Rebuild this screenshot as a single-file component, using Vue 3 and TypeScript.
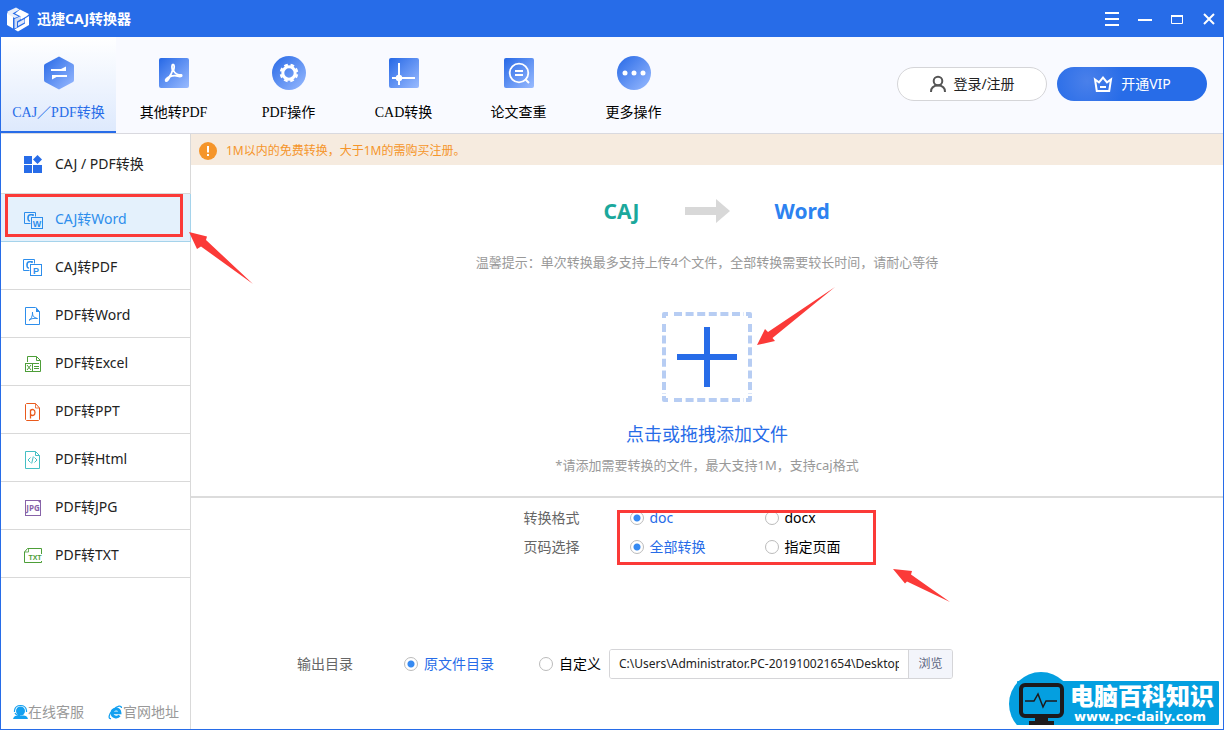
<script setup lang="ts">
import { ref } from 'vue'

interface Entry {
  id: string
  label: string
}

const tabs: Entry[] = [
  { id: 'caj', label: 'CAJ／PDF转换' },
  { id: 'other', label: '其他转PDF' },
  { id: 'pdf', label: 'PDF操作' },
  { id: 'cad', label: 'CAD转换' },
  { id: 'paper', label: '论文查重' },
  { id: 'more', label: '更多操作' },
]

const modes: Entry[] = [
  { id: 'caj-word', label: 'CAJ转Word' },
  { id: 'caj-pdf', label: 'CAJ转PDF' },
  { id: 'pdf-word', label: 'PDF转Word' },
  { id: 'pdf-excel', label: 'PDF转Excel' },
  { id: 'pdf-ppt', label: 'PDF转PPT' },
  { id: 'pdf-html', label: 'PDF转Html' },
  { id: 'pdf-jpg', label: 'PDF转JPG' },
  { id: 'pdf-txt', label: 'PDF转TXT' },
]

const activeTab = ref<string>('caj')
const activeMode = ref<string>('caj-word')
const format = ref<string>('doc')
const pages = ref<string>('all')
const target = ref<string>('source')
const outputPath = ref<string>('C:\\Users\\Administrator.PC-201910021654\\Desktop')
</script>

<template>
  <div class="window">
    <header class="titlebar">
      <svg class="logo" width="24" height="26" viewBox="0 0 24 26" aria-hidden="true">
        <path d="M1 7l6 3v12.500l-6-3.500z" fill="#fff" />
        <path d="M1.500 5.500L10 1.500l3.500 2L6.500 7.500l6 3-4 1.500-7-4z" fill="#e9effb" />
        <path d="M14 3.500l9 4.500-2 2-6 3.500v-3l-6-3z" fill="#fff" />
        <path d="M8.500 13l6.500-3v3l-4 2.500v6l-2.500 1z" fill="#cfdcf6" />
        <path d="M23 10v9l-11 6.500-3.500-2 10.500-6v-5z" fill="#fff" />
        <path d="M12 16.500l6.500-3.500v3.500L12 20z" fill="#dfe8fa" />
      </svg>
      <h1>迅捷CAJ转换器</h1>
      <div class="controls">
        <button type="button" aria-label="菜单">
          <svg width="16" height="16" viewBox="0 0 16 16"><path d="M0 2h14M0 8h14M0 14h14" stroke="#fff" stroke-width="2" /></svg>
        </button>
        <button type="button" aria-label="最小化">
          <svg width="16" height="16" viewBox="0 0 16 16"><path d="M1 9h14" stroke="#fff" stroke-width="2" /></svg>
        </button>
        <button type="button" aria-label="最大化">
          <svg width="16" height="16" viewBox="0 0 16 16"><path d="M2.500 4v8.500h11V4" fill="none" stroke="#fff" /><path d="M2 5h12" stroke="#fff" stroke-width="2" /></svg>
        </button>
        <button type="button" aria-label="关闭">
          <svg width="16" height="16" viewBox="0 0 16 16"><path d="M3 3l10 10M13 3L3 13" stroke="#fff" stroke-width="2" /></svg>
        </button>
      </div>
    </header>

    <div class="toolbar">
      <nav class="tabs">
        <button
          v-for="tab in tabs"
          :key="tab.id"
          type="button"
          :class="['tab', { active: tab.id === activeTab }]"
          @click="activeTab = tab.id"
        >
          <svg width="36" height="36" viewBox="0 0 36 36" aria-hidden="true">
            <defs>
              <linearGradient :id="'fill-' + tab.id" x1="0" y1="0" x2="1" y2="1">
                <stop offset="0" stop-color="#2668e6" />
                <stop offset="1" stop-color="#9abbff" />
              </linearGradient>
            </defs>
            <g v-if="tab.id === 'caj'">
              <path d="M18 1.500 L32 9 Q33 9.500 33 11 V25 Q33 26.500 32 27 L18 34.500 L4 27 Q3 26.500 3 25 V11 Q3 9.500 4 9 Z" :fill="`url(#fill-${tab.id})`" />
              <path d="M10 14h10l5-2.500V16H10zM26 20v2H15.500L11 24.500V20z" fill="#fff" />
            </g>
            <g v-else-if="tab.id === 'other'">
              <rect x="3" y="3" width="30" height="30" rx="2" :fill="`url(#fill-${tab.id})`" />
              <path d="M17 9.500c1.500 0 1.500 2.500.5 6 1.500 3.500 4 4.500 8 4.500.8 1.500-1.500 2-4 1-2.500-.6-5-.3-7.500.6-1.500 3-3 5-4.200 4.300-.8-.8 1-3 3.700-4.300 1.500-2 2.500-4 3-6.200-.8-3-.8-5.900.5-5.900z" fill="none" stroke="#fff" stroke-width="1.800" stroke-linejoin="round" />
            </g>
            <g v-else-if="tab.id === 'pdf'">
              <circle cx="18" cy="18" r="17" :fill="`url(#fill-${tab.id})`" />
              <circle cx="18" cy="18" r="6.200" fill="none" stroke="#fff" stroke-width="3" />
              <circle cx="18" cy="18" r="8" fill="none" stroke="#fff" stroke-width="2.600" stroke-dasharray="3.600 2.680" stroke-dashoffset="-1.300" />
            </g>
            <g v-else-if="tab.id === 'cad'">
              <rect x="3" y="3" width="30" height="30" rx="2" :fill="`url(#fill-${tab.id})`" />
              <path d="M13 8v22M6 23h23" stroke="#fff" stroke-width="2" />
              <circle cx="13" cy="23" r="3.200" fill="#fff" />
            </g>
            <g v-else-if="tab.id === 'paper'">
              <rect x="3" y="3" width="30" height="30" rx="2" :fill="`url(#fill-${tab.id})`" />
              <circle cx="18" cy="18" r="9.300" fill="none" stroke="#fff" stroke-width="1.800" />
              <path d="M14 16h8M14 20h8M24 24l4 4" stroke="#fff" stroke-width="2" />
            </g>
            <g v-else>
              <circle cx="18" cy="18" r="17" :fill="`url(#fill-${tab.id})`" />
              <circle cx="9" cy="18" r="2.500" fill="#fff" />
              <circle cx="18" cy="18" r="2.500" fill="#fff" />
              <circle cx="27" cy="18" r="2.500" fill="#fff" />
            </g>
          </svg>
          <span>{{ tab.label }}</span>
        </button>
      </nav>
      <div class="account">
        <button type="button" class="pill login">
          <svg width="18" height="18" viewBox="0 0 18 18" fill="none" stroke="#555" stroke-width="2" aria-hidden="true">
            <circle cx="9" cy="6" r="4.300" /><path d="M2 17c0-4 2.500-6.500 7-6.500s7 2.500 7 6.500" />
          </svg>
          登录/注册
        </button>
        <button type="button" class="pill vip">
          <svg width="20" height="18" viewBox="0 0 20 18" fill="none" stroke="#fff" stroke-width="2" aria-hidden="true">
            <path d="M2 4.500l4 2.800L10 2.500l4 4.800 4-2.800L16.200 16H3.800z" /><path d="M7 12h6" />
          </svg>
          开通VIP
        </button>
      </div>
    </div>

    <div class="body">
      <aside class="sidebar">
        <h2 class="group">
          <svg width="22" height="22" viewBox="0 0 22 22" fill="#276ce8" aria-hidden="true">
            <rect x="2" y="3" width="8" height="8" /><rect x="2" y="12" width="8" height="8" />
            <rect x="11" y="12" width="9" height="8" /><path d="M15.500 2l4.500 4.500-4.500 4.500L11 6.500z" />
          </svg>
          CAJ / PDF转换
        </h2>
        <ul>
          <li v-for="mode in modes" :key="mode.id" :class="{ selected: mode.id === activeMode }">
            <button type="button" @click="activeMode = mode.id">
              <svg width="22" height="22" viewBox="0 0 22 22" fill="none" aria-hidden="true">
                <g v-if="mode.id === 'caj-word'" stroke="#2d8eec">
                  <path d="M8.500 15.500h-6v-11h11v4" /><rect x="9.500" y="9.500" width="11" height="11" />
                  <path d="M11 8V6.800H8.500Q6 6.800 6 10t2 3" stroke-width="1.600" />
                  <text class="glyph" x="15" y="18.500" font-size="9" fill="#2d8eec" stroke="none">W</text>
                </g>
                <g v-else-if="mode.id === 'caj-pdf'" stroke="#2d8eec">
                  <path d="M7.500 14.500h-6v-11h11v4" /><rect x="8.500" y="8.500" width="11" height="11" />
                  <path d="M10 7V5.800H7.500Q5 5.800 5 9t2 3" stroke-width="1.600" />
                  <text class="glyph" x="14" y="17.500" font-size="9" fill="#2d8eec" stroke="none">P</text>
                </g>
                <g v-else-if="mode.id === 'pdf-word'" stroke="#2d8eec">
                  <path d="M13.500 3.500h-10v17h14v-13z" /><path d="M14 3v5h4z" fill="#2d8eec" stroke="none" />
                  <path d="M10.500 8c0 4 1 5.500 5 6.500M10.500 8c.3 4-1.500 7.500-3.500 8.500M7 16c2.500-1.500 5-2 8.500-1.500" />
                </g>
                <g v-else-if="mode.id === 'pdf-excel'" stroke="#4d9e38">
                  <path d="M5.500 10V4.500h9l4 4v11H11" /><path d="M14.500 4.500v4h4M11 11.500h6M12 14.500h5M12 16.500h5" />
                  <rect x="3.500" y="11.500" width="7" height="8" /><path d="M5 13l4 5M9 13l-4 5" />
                </g>
                <g v-else-if="mode.id === 'pdf-ppt'" stroke="#e95a1c">
                  <path d="M13.500 3.500h-9l-1 1v15l1 1h12l1-1V8z" /><path d="M13.500 3.500v4.500h4" stroke-width=".8" />
                  <path d="M8.500 18.500v-9M8.500 10.500c1.500-1.500 4.500-1.500 4.500 2s-3 3.500-4.500 2" stroke-width="1.300" />
                </g>
                <g v-else-if="mode.id === 'pdf-html'" stroke="#45bfc4">
                  <path d="M13.500 3.500h-10v17h14v-13z" /><path d="M13.500 3.500v4h4" />
                  <path d="M8.500 9.500L6 12l2.500 2.500M12.500 9.500L15 12l-2.500 2.500M11.300 8.500l-1.600 7" />
                </g>
                <g v-else-if="mode.id === 'pdf-jpg'" stroke="#8763a8">
                  <rect x="3.500" y="4.500" width="15" height="15" /><path d="M15 4h4v4z" fill="#8763a8" stroke="none" />
                  <text class="glyph narrow" x="11" y="15" font-size="8" fill="#8763a8" stroke="none">JPG</text>
                </g>
                <g v-else stroke="#4d9e38">
                  <path d="M19.500 10V4.500h-14l-3 3.500v10.500h17V17" /><path d="M6.500 4.500V8h-4" stroke-width=".8" />
                  <text class="glyph" x="13" y="16" font-size="7" fill="#4d9e38" stroke="none">TXT</text>
                </g>
              </svg>
              {{ mode.label }}
            </button>
            <template v-if="mode.id === 'caj-word'">
              <span class="mark mark-mode"></span>
              <svg class="arrow arrow-mode" width="64" height="54" viewBox="0 0 64 54" aria-hidden="true">
                <path d="M0 1L18 5.500 17 9 64 53 12 15.500 8 18z" fill="#fb3a38" />
              </svg>
            </template>
          </li>
        </ul>
        <footer class="links">
          <a href="#service">
            <svg width="15" height="16" viewBox="0 0 15 16" aria-hidden="true">
              <circle cx="7.500" cy="7" r="4.500" fill="#14a0f0" />
              <path d="M1.500 8V6.500C2 3 4.500 1.500 7.500 1.500S13 3 13.500 6.500V8M2 9c1 2 3 2.500 5 2.500" fill="none" stroke="#14a0f0" stroke-width="1.200" />
              <path d="M0 15c.5-2.500 2.500-3.500 4.500-3.500h6c2 0 4 1 4.500 3.500z" fill="#14a0f0" />
            </svg>
            在线客服
          </a>
          <a href="#site">
            <svg width="15" height="16" viewBox="0 0 15 16" fill="none" stroke="#14a0f0" aria-hidden="true">
              <path d="M11.500 11.500c-2 2.500-7.500 2-7.500-2.500s7.500-5.500 8-.2H5" stroke-width="2.800" />
              <path d="M3 14.500C0 15 .5 10.500 5 6S13.500 1 13.500 4" stroke-width="1.300" />
            </svg>
            官网地址
          </a>
        </footer>
      </aside>

      <main class="main">
        <p class="notice">
          <svg width="18" height="18" viewBox="0 0 18 18" aria-hidden="true">
            <circle cx="9" cy="9" r="9" fill="#f5952a" /><path d="M8 4h2v6.500H8zM8 12h2v2H8z" fill="#fff" />
          </svg>
          1M以内的免费转换，大于1M的需购买注册。
        </p>

        <section class="upload">
          <div class="direction">
            <strong class="from">CAJ</strong>
            <svg width="45" height="24" viewBox="0 0 45 24" aria-hidden="true"><path d="M0 8h31V0l14 12-14 12v-8H0z" fill="#d8d8d8" /></svg>
            <strong class="to">Word</strong>
          </div>
          <p class="hint">温馨提示：单次转换最多支持上传4个文件，全部转换需要较长时间，请耐心等待</p>
          <div class="drop">
            <button type="button" aria-label="添加文件">
              <svg width="90" height="90" viewBox="0 0 90 90" fill="none" aria-hidden="true">
                <path d="M2 6V2H6M84 2h4v4M88 84v4h-4M6 88H2v-4" stroke="#b7cdf3" stroke-width="4" stroke-linejoin="round" />
                <path d="M12 2h70M12 88h70M2 12v70M88 12v70" stroke="#b7cdf3" stroke-width="4" stroke-dasharray="8 3.600" />
                <path d="M45 15v60M15 45h60" stroke="#276ce8" stroke-width="6" />
              </svg>
            </button>
            <svg class="arrow arrow-drop" width="80" height="60" viewBox="0 0 80 60" aria-hidden="true">
              <path d="M0 59L8 43 11 46 78 1 15.500 52 18 55z" fill="#fb3a38" />
            </svg>
          </div>
          <p class="action">点击或拖拽添加文件</p>
          <p class="limit">*请添加需要转换的文件，最大支持1M，支持caj格式</p>
        </section>

        <section class="settings">
          <div class="options">
            <span class="name">转换格式</span>
            <label><input v-model="format" type="radio" name="format" value="doc" /><span>doc</span></label>
            <label><input v-model="format" type="radio" name="format" value="docx" /><span>docx</span></label>
            <span class="name">页码选择</span>
            <label><input v-model="pages" type="radio" name="pages" value="all" /><span>全部转换</span></label>
            <label><input v-model="pages" type="radio" name="pages" value="range" /><span>指定页面</span></label>
            <span class="mark mark-options"></span>
            <svg class="arrow arrow-options" width="58" height="36" viewBox="0 0 58 36" aria-hidden="true">
              <path d="M0 1L19 3 18 6.500 57 34 14 13.500 12 15.500z" fill="#fb3a38" />
            </svg>
          </div>
          <div class="output">
            <span class="name">输出目录</span>
            <label><input v-model="target" type="radio" name="target" value="source" /><span>原文件目录</span></label>
            <label><input v-model="target" type="radio" name="target" value="custom" /><span>自定义</span></label>
            <div class="path">
              <input v-model="outputPath" type="text" aria-label="输出目录路径" />
              <button type="button">浏览</button>
            </div>
          </div>
        </section>
      </main>
    </div>

    <svg class="badge" width="210" height="53" viewBox="0 0 210 53" role="img" aria-label="电脑百科知识">
      <circle cx="32" cy="32" r="32" fill="#049fe0" />
      <rect x="8" y="9" width="202" height="44" rx="1" fill="#049fe0" />
      <rect x="12" y="13" width="41" height="31" rx="4" fill="#049fe0" stroke="#1d1a1c" stroke-width="4" />
      <path d="M16 29h9l4-7 5 13 3-6h11" fill="none" stroke="#1d1a1c" stroke-width="1.500" />
      <path d="M26 44h13v5h6v4H20v-4h6z" fill="#1d1a1c" />
      <text class="badge-name" x="61" y="33">电脑百科知识</text>
      <text class="badge-url" x="65" y="49">www.pc-daily.com</text>
    </svg>
  </div>
</template>

<style>
body {
  margin: 0;
}
</style>

<style scoped>
* {
  box-sizing: border-box;
}
.window {
  position: relative;
  display: flex;
  flex-direction: column;
  min-height: 100vh;
  border: solid #276ce8;
  border-width: 0 1px 1px;
  background: #fff;
  color: #222;
  font: 14px/20px "Noto Sans", "Noto Sans CJK SC", sans-serif;
}
button,
input {
  font: inherit;
}
button {
  padding: 0;
  border: 0;
  background: none;
  color: inherit;
  cursor: pointer;
}
h1,
h2,
p,
ul {
  margin: 0;
  padding: 0;
}
svg {
  display: block;
  flex: none;
}
.titlebar {
  display: flex;
  align-items: center;
  height: 37px;
  padding: 0 1px 0 5px;
  background: #276ce8;
  color: #fff;
}
h1 {
  margin-left: 7px;
  font-size: 14px;
  font-weight: 700;
}
.controls {
  display: flex;
  gap: 6px;
  margin-left: auto;
}
.controls button {
  display: grid;
  place-items: center;
  width: 26px;
  height: 36px;
}
.toolbar {
  display: flex;
  justify-content: space-between;
  height: 97px;
  border-bottom: 1px solid #d9d9df;
  background: #f9faff;
}
.tabs {
  display: flex;
}
.tab {
  display: flex;
  flex-direction: column;
  align-items: center;
  gap: 12px;
  width: 115px;
  padding-top: 18px;
  border-bottom: 2px solid transparent;
  color: #000;
  font: 14px/20px "Liberation Serif", "Noto Sans CJK SC", serif;
}
.tab.active {
  border-color: #276ce8;
  background: linear-gradient(#fff, #dde9fd) border-box;
  color: #276ce8;
}
.account {
  display: flex;
  align-items: center;
  gap: 10px;
  padding: 0 16px 2px 0;
}
.pill {
  display: flex;
  align-items: center;
  justify-content: center;
  gap: 6px;
  width: 150px;
  height: 34px;
  border-radius: 17px;
}
.login {
  border: 1px solid #d5d5d8;
  background: #fff;
}
.vip {
  gap: 8px;
  background: radial-gradient(circle at 30px 14px, #4a80ea, #276ce8 38px);
  color: #fff;
}
.body {
  display: flex;
  flex: 1;
}
.sidebar {
  display: flex;
  flex: none;
  flex-direction: column;
  width: 190px;
  border-right: 1px solid #d9d9d9;
}
.group,
li button {
  display: flex;
  align-items: center;
  gap: 11px;
  padding-left: 21px;
  font-size: 14px;
  font-weight: 400;
}
.group {
  height: 60px;
  padding-top: 1px;
  border-bottom: 1px solid #d9d9d9;
}
ul {
  list-style: none;
}
li {
  position: relative;
  height: 48px;
  border-bottom: 1px solid #d9d9d9;
}
li button {
  width: 100%;
  height: 100%;
  padding-top: 3px;
  text-align: left;
}
li.selected {
  margin-right: -1px;
  border-right: 1px solid #a5d3eb;
  border-bottom-color: #a5d3eb;
  background: #e4f1fc;
  color: #2d8eec;
}
.glyph {
  font-family: "Liberation Sans", sans-serif;
  font-weight: 700;
  text-anchor: middle;
}
.narrow {
  font-family: "Liberation Sans Narrow", "Open Sans", sans-serif;
}
.links {
  display: flex;
  gap: 24px;
  margin-top: auto;
  padding: 0 0 7px 12px;
}
.links a {
  display: flex;
  align-items: center;
  color: #999;
  text-decoration: none;
  white-space: nowrap;
}
.main {
  flex: 1;
  min-width: 0;
}
.notice {
  display: flex;
  align-items: center;
  gap: 9px;
  height: 31px;
  padding: 2px 0 0 8px;
  background: #f6ebdf;
  color: #f5952a;
  font-size: 12px;
}
.upload {
  display: flex;
  flex-direction: column;
  align-items: center;
  padding: 31px 0 21px;
  border-bottom: 2px solid #dcdcdc;
  text-align: center;
}
.direction {
  display: grid;
  grid-template-columns: 1fr auto 1fr;
  align-items: center;
  gap: 45px;
  width: 100%;
  font-size: 21px;
  line-height: 30px;
}
.from {
  color: #1ba89c;
  text-align: right;
}
.to {
  color: #2d82f0;
  text-align: left;
}
.hint,
.limit {
  color: #999;
  font-size: 13px;
}
.hint {
  margin-top: 26px;
}
.drop {
  position: relative;
  margin-top: 40px;
}
.drop button {
  display: block;
}
.action {
  margin-top: 20px;
  color: #276ce8;
  font-size: 18px;
  line-height: 24px;
}
.limit {
  margin-top: 9px;
}
.settings {
  padding-top: 5px;
}
.options {
  position: relative;
  display: grid;
  grid-template-columns: 106px 135px 126px;
  grid-auto-rows: 29px;
  align-items: center;
  width: 367px;
  margin: 0 auto;
}
.output {
  display: grid;
  grid-template-columns: 107px 135px 70px 344px;
  align-items: center;
  margin: 88px 0 0 106px;
}
.name {
  color: #666;
}
label {
  display: flex;
  align-items: center;
  gap: 6px;
  color: #000;
  white-space: nowrap;
}
input[type="radio"] {
  flex: none;
  width: 14px;
  height: 14px;
  margin: 0;
  border: 1px solid #bbb;
  border-radius: 50%;
  background: #fff;
  appearance: none;
}
input[type="radio"]:checked {
  background: radial-gradient(circle, #368af2 3px, #fff 4px);
}
input:checked + span {
  color: #276ce8;
}
.path {
  display: flex;
  height: 30px;
  border: 1px solid #d5d5d8;
  border-radius: 3px;
  overflow: hidden;
}
.path input {
  flex: 1;
  min-width: 0;
  padding: 0 9px;
  border: 0;
  outline: 0;
  background: #fff;
  color: #222;
  font-size: 12px;
}
.path button {
  width: 44px;
  border-left: 1px solid #d5d5d8;
  background: #f3f5fb;
  color: #5c6480;
  font-size: 12px;
}
.mark {
  position: absolute;
  border: 3px solid #fb3a38;
  pointer-events: none;
}
.mark-mode {
  top: 0;
  left: 4px;
  width: 178px;
  height: 43px;
}
.mark-options {
  top: 7px;
  left: 93px;
  width: 259px;
  height: 55px;
}
.arrow {
  position: absolute;
  z-index: 1;
  pointer-events: none;
}
.arrow-mode {
  top: 37px;
  left: 188px;
}
.arrow-drop {
  top: -26px;
  left: 95px;
}
.arrow-options {
  top: 65px;
  left: 369px;
}
.badge {
  position: absolute;
  right: 4px;
  bottom: 4px;
}
.badge-name {
  fill: #fff;
  font: 900 24px "Noto Sans CJK SC", sans-serif;
}
.badge-url {
  fill: #fff;
  font: 700 13px "DejaVu Sans", sans-serif;
}
</style>
